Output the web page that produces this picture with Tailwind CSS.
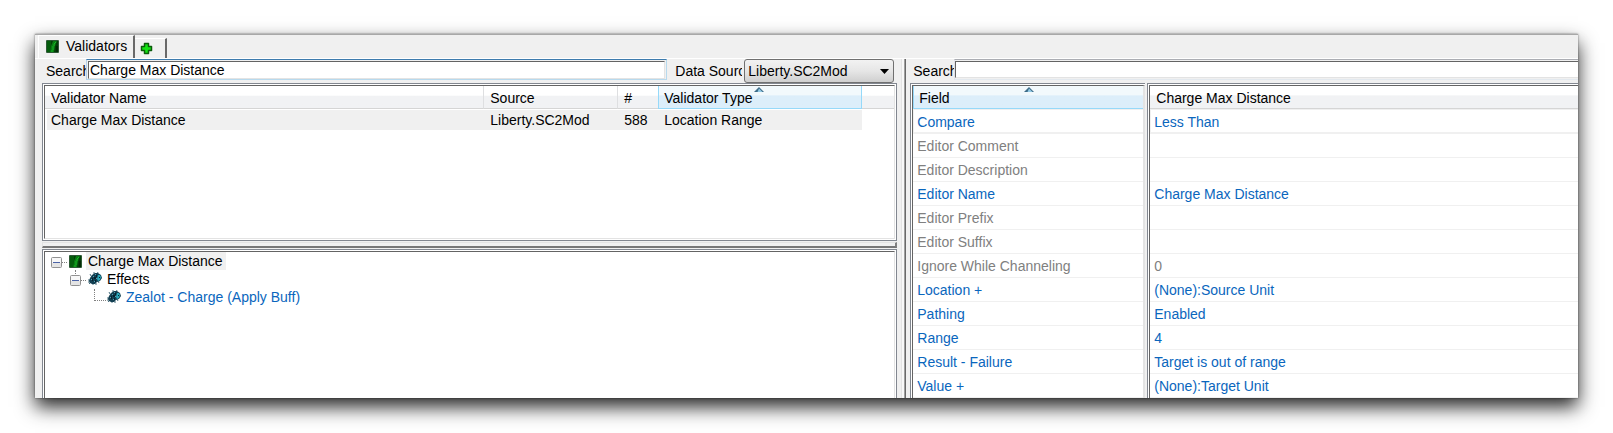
<!DOCTYPE html>
<html lang="en">
<head>
<meta charset="utf-8">
<title>Validators</title>
<script src="https://cdn.jsdelivr.net/npm/@tailwindcss/browser@4"></script>
</head>
<body class="bg-white">
<svg class="hidden" aria-hidden="true">
  <symbol id="validator" viewBox="0 0 13 13">
    <rect width="13" height="13" rx="1" fill="#2d5a35"/>
    <rect x="1" y="1" width="11" height="11" fill="#033d08"/>
    <path d="M1 1h4v4L4 12H1z" fill="#055c0c"/>
    <path d="M7 1h4L9 6l-1 6H4l1-6z" fill="#087d12"/>
    <path d="M10 2 8 4M7 5h2M6 7h2M6 9h2M5 11h2" stroke="#19b526" fill="none"/>
    <path d="M10 6h2v6h-2z" fill="#022b05"/>
  </symbol>
  <symbol id="effect" viewBox="0 0 15 14">
    <path d="M1 10h2M2 12l2-2M4 4 3 2M7 2V0M10 2 11 0M6 13v-2M9 13v-2M12 11l-1-2M1 8h2" stroke="#49707f" fill="none"/>
    <path d="M2 9 3 6l2-3 3-2h3l3 2 1 3-2 3-3 1-2 2H5l-2-1z" fill="#123f52"/>
    <path d="M11 3h2l1 2-1 3-2 1-1-2z" fill="#2aa7b8"/>
    <path d="M6 4h1v1H6zM8 2h1v1H8zM4 7h1v1H4zM7 9h1v1H7zM9 6h1v1H9z" fill="#4d9fb5"/>
    <path d="M7 5h2v2H7zM5 6h1v3H5zM9 3h1v2H9zM12 5h1v1h-1zM8 8h1v2H8z" fill="#06202c"/>
  </symbol>
  <symbol id="minus" viewBox="0 0 11 11">
    <rect x=".5" y=".5" width="10" height="10" rx="1" fill="#f7f7f7" stroke="#919191"/>
    <path d="M1 6h9v4H1z" fill="#e4e4e4"/>
    <path d="M2 5.500h7" stroke="#4b63a7"/>
  </symbol>
  <symbol id="sort" viewBox="0 0 10 5">
    <path d="M5 0 10 5H0z" fill="#3d6c88"/><path d="M5 1.500 8.500 5H3.500z" fill="#94cbe6"/>
  </symbol>
</svg>

<div class="flex h-screen px-[35px] pt-[34px] pb-[35px] font-['Liberation_Sans',Arial,sans-serif] text-[14px] leading-4 text-black">
<main class="flex min-w-0 flex-1 flex-col overflow-hidden border-t border-[#a8a8a8] bg-[#f0f0f0] shadow-[0_9px_18px_rgba(0,0,0,0.85),0_0_2px_rgba(0,0,0,0.5)]">

  <nav class="flex h-6 shrink-0 items-end border-b border-white pl-[3px]" role="tablist">
    <button role="tab" aria-selected="true" class="flex h-[23px] items-center gap-[7px] border-t border-l border-r-2 border-t-white border-l-white border-r-[#696969] pr-[6px] pb-[2px] pl-[7px]">
      <svg class="size-[13px]"><use href="#validator"/></svg>Validators
    </button>
    <button role="tab" aria-label="New tab" class="flex h-5 w-8 items-center border-t border-r-2 border-t-white border-r-[#696969] pl-[5px]">
      <svg class="size-[13px]" viewBox="0 0 13 13"><path d="M4.500 1.500h4v3h3v4h-3v3h-4v-3h-3v-4h3z" fill="#14e314" stroke="#0b5c0b" stroke-width="1.500" stroke-linejoin="round"/></svg>
    </button>
  </nav>

  <div class="flex min-h-0 flex-1">
    <section class="flex min-w-0 flex-[862_1_0%] flex-col pl-[7px]">
      <form class="flex h-6 shrink-0 items-start pr-[3px] pl-1">
        <label for="q" class="mt-1 w-[40px] overflow-hidden whitespace-nowrap">Search</label>
        <div class="flex h-[21px] min-w-0 flex-1 border border-t-[#3d7bad] border-r-[#b7d9ed] border-b-[#b7d9ed] border-l-[#b5cfe7]">
          <input id="q" value="Charge Max Distance" class="m-px mb-0 h-[18px] min-w-0 flex-1 border border-t-[#646464] border-r-[#e3e3e3] border-b-[#e3e3e3] border-l-[#646464] bg-white px-px outline-none">
        </div>
        <label for="src" class="mt-1 mr-[2px] ml-2 w-[67px] overflow-hidden whitespace-nowrap">Data Source</label>
        <div class="relative w-[150px]">
          <select id="src" class="h-6 w-full appearance-none rounded-[3px] border border-[#707070] bg-linear-to-b from-[#f2f2f2] via-[#e6e6e6] to-[#cfcfcf] pl-[3px] leading-4 outline-none"><option>Liberty.SC2Mod</option></select>
          <svg class="pointer-events-none absolute top-[10px] right-[5px] h-[5px] w-[9px]" viewBox="0 0 9 5"><path d="M0 0h9L4.500 5z"/></svg>
        </div>
      </form>

      <div class="h-[158px] shrink-0 border border-[#828790] bg-white p-px">
        <div class="h-full border border-t-[#646464] border-r-[#e3e3e3] border-b-[#e3e3e3] border-l-[#646464]">
          <table class="w-full table-fixed border-separate border-spacing-0 text-left">
            <colgroup><col><col class="w-[134px]"><col class="w-[40px]"><col class="w-[204px]"><col class="w-[32px]"></colgroup>
            <thead>
              <tr class="h-[23px] bg-linear-to-b from-white from-40% to-[#f1f2f4] to-45%">
                <th class="border-r border-b border-r-[#dedfe1] border-b-[#d5d5d5] p-0 pt-[2px] pl-[6px] font-normal">Validator Name</th>
                <th class="border-r border-b border-r-[#dedfe1] border-b-[#d5d5d5] p-0 pt-[2px] pl-[6px] font-normal">Source</th>
                <th class="border-b border-[#d5d5d5] p-0 pt-[2px] pl-[6px] font-normal">#</th>
                <th class="relative border border-t-0 border-[#96d9f9] bg-linear-to-b from-[#f2f9fc] from-40% to-[#dceefa] to-45% p-0 pt-[2px] pl-[5px] font-normal">Validator Type<svg class="absolute top-px left-[95px] h-[5px] w-[10px]"><use href="#sort"/></svg></th>
                <th class="border-b border-[#d5d5d5] p-0"></th>
              </tr>
            </thead>
            <tbody>
              <tr class="h-[22px]">
                <td class="border-y border-l-2 border-white bg-[#f0f0f0] p-0 pl-1">Charge Max Distance</td>
                <td class="border-y border-white bg-[#f0f0f0] p-0 pl-[6px]">Liberty.SC2Mod</td>
                <td class="border-y border-white bg-[#f0f0f0] p-0 pl-[6px]">588</td>
                <td class="border-y border-white bg-[#f0f0f0] p-0 pl-[6px]">Location Range</td>
                <td class="p-0"></td>
              </tr>
            </tbody>
          </table>
        </div>
      </div>

      <div class="my-px h-[6px] shrink-0 border border-r-2 border-b-2 border-t-[#e3e3e3] border-r-[#808080] border-b-[#777777] border-l-[#e3e3e3]"></div>

      <div class="min-h-0 flex-1 border border-b-0 border-[#828790] bg-white p-px pb-0">
        <div class="h-full border border-b-0 border-t-[#646464] border-r-[#e3e3e3] border-l-[#646464] pl-[6px]" role="tree">
          <div class="flex h-[18px] items-center" role="treeitem" aria-expanded="true">
            <svg class="mt-[2px] size-[11px]"><use href="#minus"/></svg>
            <span class="mt-[2px] mr-[2px] w-[5px] border-t border-dotted border-[#808080]"></span>
            <svg class="size-[13px]"><use href="#validator"/></svg>
            <span class="ml-1 h-[18px] bg-[#f0f0f0] pt-px pr-[3px] pl-[2px]">Charge Max Distance</span>
          </div>
          <div class="relative flex h-[18px] items-center pl-[19px]" role="treeitem" aria-expanded="true">
            <span class="absolute top-0 left-6 h-1 border-l border-dotted border-[#808080]"></span>
            <svg class="mt-[2px] size-[11px]"><use href="#minus"/></svg>
            <span class="mt-[2px] mr-px w-[5px] border-t border-dotted border-[#808080]"></span>
            <svg class="h-[14px] w-[15px]"><use href="#effect"/></svg>
            <span class="ml-[5px]">Effects</span>
          </div>
          <div class="flex h-[18px] items-center pl-[43px]" role="treeitem">
            <span class="mb-1 h-3 w-3 border-b border-l border-dotted border-[#808080]"></span>
            <svg class="h-[14px] w-[15px]"><use href="#effect"/></svg>
            <a href="#" class="ml-[5px] text-[#0a66bd]">Zealot - Charge (Apply Buff)</a>
          </div>
        </div>
      </div>
    </section>

    <div class="ml-1 w-1 shrink-0 border-x border-l-[#e3e3e3] border-r-[#a0a0a0] bg-[#f8f8f8]"></div>

    <section class="flex min-w-0 flex-[673_1_0%] flex-col border-l border-[#696969] pl-1">
      <form class="flex h-6 shrink-0 items-start pl-[3px]">
        <label for="fq" class="mt-1 w-[41px] overflow-hidden whitespace-nowrap">Search</label>
        <div class="flex h-[21px] min-w-0 flex-1 border-y border-l border-t-[#abadb3] border-b-[#e3e9ef] border-l-[#e2e3ea]">
          <input id="fq" class="my-px h-[17px] min-w-0 flex-1 border border-r-0 border-t-[#646464] border-b-[#e3e3e3] border-l-[#646464] bg-white px-px outline-none">
        </div>
      </form>
      <div class="flex min-h-0 flex-1 overflow-hidden">
        <div class="w-[235px] shrink-0 border-t border-l border-[#828790] bg-white pt-px pl-px">
          <div class="h-full border-t border-r-2 border-l border-t-[#646464] border-r-[#e3e3e3] border-l-[#646464]">
            <table class="w-full border-separate border-spacing-0 text-left text-[#0a66bd]">
              <thead><tr class="h-[23px]"><th class="relative border-b border-l border-[#96d9f9] bg-linear-to-b from-[#f2f9fc] from-40% to-[#dceefa] to-45% p-0 pt-[2px] pl-[5px] font-normal text-black">Field<svg class="absolute top-px left-[110px] h-[5px] w-[10px]"><use href="#sort"/></svg></th></tr></thead>
              <tbody>
                <tr class="h-[25px]"><td class="border-t border-b-2 border-l border-[#f0f0f0] p-0 pt-[2px] pl-[3px]">Compare</td></tr>
                <tr class="h-6"><td class="border-b border-[#f0f0f0] p-0 pl-1 text-[#808080]">Editor Comment</td></tr>
                <tr class="h-6"><td class="border-b border-[#f0f0f0] p-0 pl-1 text-[#808080]">Editor Description</td></tr>
                <tr class="h-6"><td class="border-b border-[#f0f0f0] p-0 pl-1">Editor Name</td></tr>
                <tr class="h-6"><td class="border-b border-[#f0f0f0] p-0 pl-1 text-[#808080]">Editor Prefix</td></tr>
                <tr class="h-6"><td class="border-b border-[#f0f0f0] p-0 pl-1 text-[#808080]">Editor Suffix</td></tr>
                <tr class="h-6"><td class="border-b border-[#f0f0f0] p-0 pl-1 text-[#808080]">Ignore While Channeling</td></tr>
                <tr class="h-6"><td class="border-b border-[#f0f0f0] p-0 pl-1">Location +</td></tr>
                <tr class="h-6"><td class="border-b border-[#f0f0f0] p-0 pl-1">Pathing</td></tr>
                <tr class="h-6"><td class="border-b border-[#f0f0f0] p-0 pl-1">Range</td></tr>
                <tr class="h-6"><td class="border-b border-[#f0f0f0] p-0 pl-1">Result - Failure</td></tr>
                <tr class="h-6"><td class="border-b border-[#f0f0f0] p-0 pl-1">Value +</td></tr>
              </tbody>
            </table>
          </div>
        </div>
        <div class="ml-[2px] min-w-0 flex-1 border-t border-l border-[#828790] bg-white pt-px pl-px">
          <div class="h-full border-t border-l border-[#646464]">
            <table class="w-full border-separate border-spacing-0 text-left text-[#0a66bd]">
              <thead><tr class="h-[23px]"><th class="border-b border-[#d5d5d5] bg-linear-to-b from-white from-40% to-[#f1f2f4] to-45% p-0 pt-[2px] pl-[6px] font-normal text-black">Charge Max Distance</th></tr></thead>
              <tbody>
                <tr class="h-[25px]"><td class="border-t border-b-2 border-l border-[#f0f0f0] p-0 pt-[2px] pl-[3px]">Less Than</td></tr>
                <tr class="h-6"><td class="border-b border-[#f0f0f0] p-0 pl-1"></td></tr>
                <tr class="h-6"><td class="border-b border-[#f0f0f0] p-0 pl-1"></td></tr>
                <tr class="h-6"><td class="border-b border-[#f0f0f0] p-0 pl-1">Charge Max Distance</td></tr>
                <tr class="h-6"><td class="border-b border-[#f0f0f0] p-0 pl-1"></td></tr>
                <tr class="h-6"><td class="border-b border-[#f0f0f0] p-0 pl-1"></td></tr>
                <tr class="h-6"><td class="border-b border-[#f0f0f0] p-0 pl-1 text-[#808080]">0</td></tr>
                <tr class="h-6"><td class="border-b border-[#f0f0f0] p-0 pl-1">(None):Source Unit</td></tr>
                <tr class="h-6"><td class="border-b border-[#f0f0f0] p-0 pl-1">Enabled</td></tr>
                <tr class="h-6"><td class="border-b border-[#f0f0f0] p-0 pl-1">4</td></tr>
                <tr class="h-6"><td class="border-b border-[#f0f0f0] p-0 pl-1">Target is out of range</td></tr>
                <tr class="h-6"><td class="border-b border-[#f0f0f0] p-0 pl-1">(None):Target Unit</td></tr>
              </tbody>
            </table>
          </div>
        </div>
      </div>
    </section>
  </div>
</main>
</div>
</body>
</html>
